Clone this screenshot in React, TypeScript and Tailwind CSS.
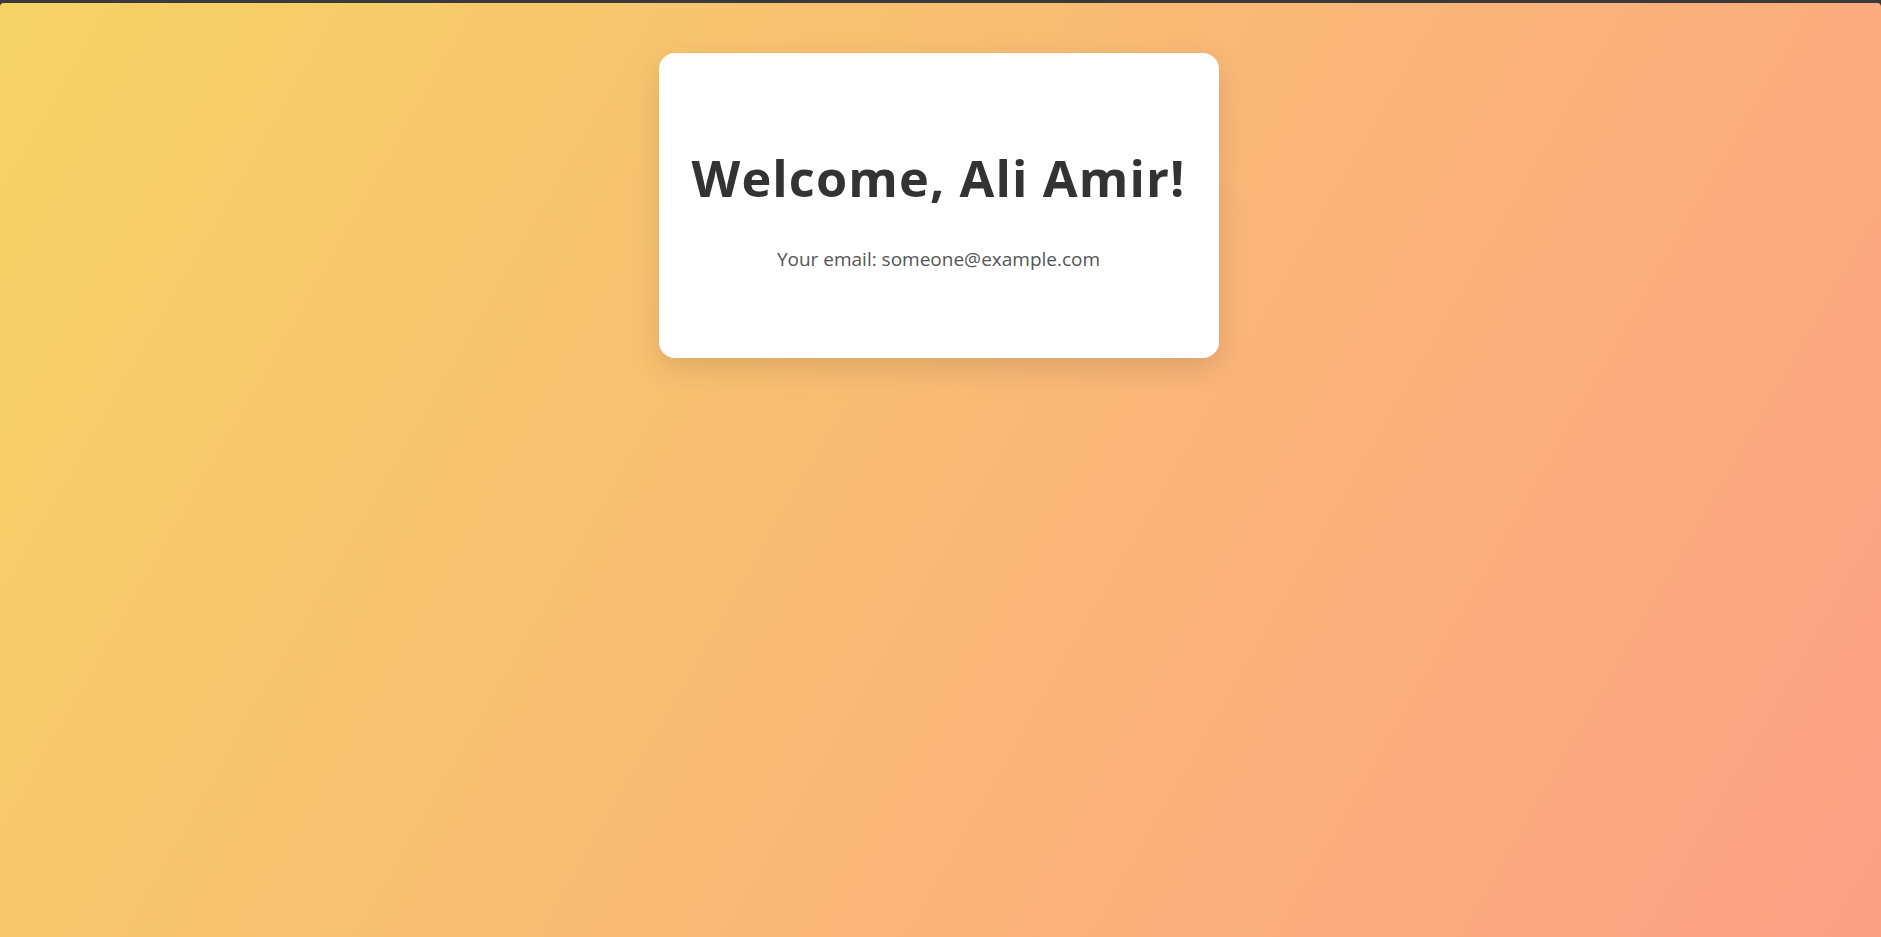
export default function App() {
  return (
    <div className="min-h-screen flex flex-col bg-[#3a3a3a]">
      <div className="h-[3px] shrink-0" />
      <main
        className="flex-1 flex justify-center items-start bg-[linear-gradient(120deg,#f6d365_0%,#fda085_100%)] rounded-tl-[4px] rounded-tr-[4px]"
        style={{ fontFamily: '"Open Sans", "Noto Sans", sans-serif' }}
      >
        <div className="mt-[50px] -translate-x-[2px] w-[560px] h-[305px] bg-white rounded-[16px] shadow-[0_10px_30px_rgba(0,0,0,0.12)] flex flex-col items-center pt-[92px]">
          <h1 className="text-[50.5px] leading-[66px] font-bold text-[#333] tracking-[1.1px]">
            Welcome, Ali Amir!
          </h1>
          <p className="mt-[34px] text-[19px] leading-[28px] text-[#555]">
            Your email: someone@example.com
          </p>
        </div>
      </main>
    </div>
  );
}
